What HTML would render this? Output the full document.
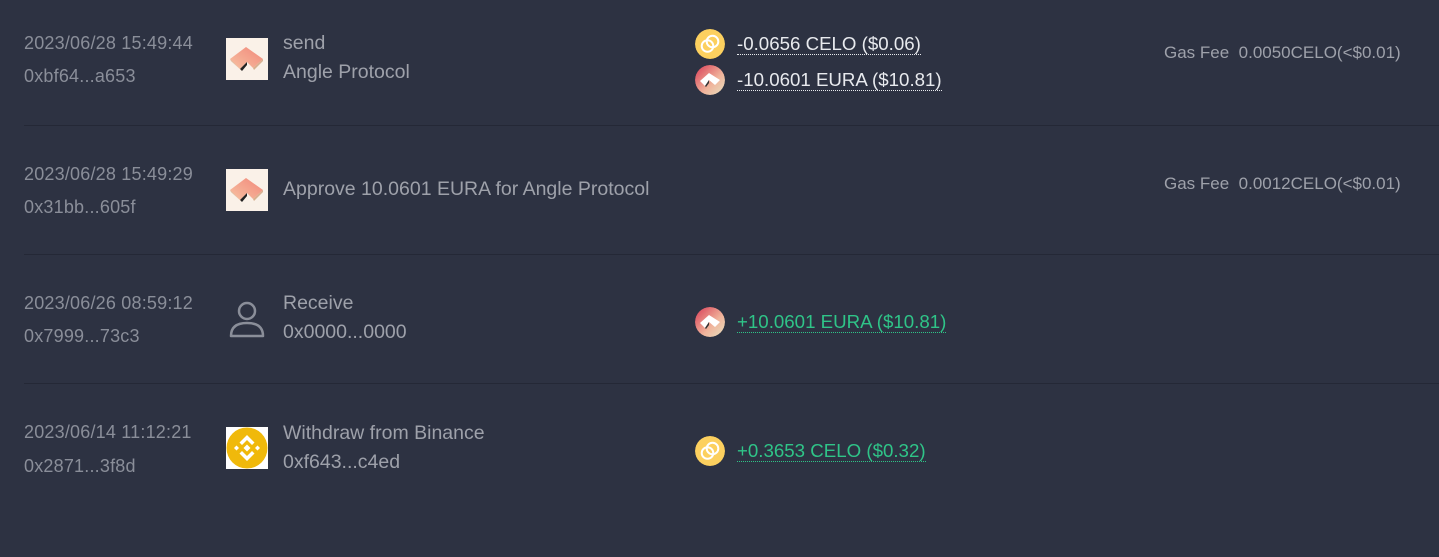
<!DOCTYPE html><html><head><style>
body{margin:0;width:1439px;height:557px;background:#2d3242;font-family:"Liberation Sans",sans-serif;overflow:hidden;position:relative}
.a{position:absolute;white-space:nowrap}
.d{color:#8a8e99;font-size:18px;letter-spacing:0.2px}
.t{color:#9ea1aa;font-size:19.5px}
.m{font-size:18.7px;color:#e8eaee;border-bottom:1px dotted #e8eaee;line-height:21px}
.g{color:#2fc488;border-bottom-color:#2fc488}
.sep{position:absolute;left:24px;right:0;height:1px;background:#242836}
.ic{position:absolute;width:42px;height:42px}
.c{position:absolute;width:30px;height:30px;border-radius:50%}
.gf{color:#9ea1aa;font-size:17px}
</style></head><body>
<svg width="0" height="0" style="position:absolute"><defs>
<linearGradient id="ag" x1="0" y1="1" x2="1" y2="0"><stop offset="0" stop-color="#f7c2a2"/><stop offset="1" stop-color="#f1877a"/></linearGradient>
<symbol id="ang" viewBox="0 0 42 42"><rect width="42" height="42" fill="#faf1e8"/><path d="M4 21 L20 9 L37 21 L27 30 L21 24 L14 31 Z" fill="url(#ag)"/><path d="M14 31 L21 24 L21 27 L16 33 Z" fill="#222"/><path d="M4 21 L14 31 L16 33 L5 23Z" fill="#d8b08f"/><path d="M27 30 L37 21 L37 23 L28 32Z" fill="#d8b08f"/></symbol>
<symbol id="celo" viewBox="0 0 30 30"><circle cx="15" cy="15" r="15" fill="#fcd05f"/><circle cx="12.5" cy="17" r="5.8" fill="none" stroke="#fff" stroke-width="2"/><circle cx="17.5" cy="12.5" r="5.8" fill="none" stroke="#fff" stroke-width="2"/></symbol>
<linearGradient id="eg" x1="0" y1="0" x2="1" y2="1"><stop offset="0" stop-color="#d83a55"/><stop offset=".6" stop-color="#f0b59c"/><stop offset="1" stop-color="#e6e0c0"/></linearGradient>
<symbol id="eura" viewBox="0 0 30 30"><circle cx="15" cy="15" r="15" fill="url(#eg)"/><path d="M5 16 L14 8 L25 15 L20 20 L14 15 L10 21 Z" fill="#fff"/><path d="M10 21 L14 15 L14 18 L11 22Z" fill="#333"/></symbol>
</defs></svg>

<div class="a d" style="left:24px;top:33px">2023/06/28 15:49:44</div>
<div class="a d" style="left:24px;top:66px">0xbf64...a653</div>
<svg class="ic" style="left:226px;top:38px"><use href="#ang"/></svg>
<div class="a t" style="left:283px;top:32px">send</div>
<div class="a t" style="left:283px;top:61px">Angle Protocol</div>
<svg class="c" style="left:695px;top:29px"><use href="#celo"/></svg>
<div class="a m" style="left:737px;top:33px">-0.0656 CELO ($0.06)</div>
<svg class="c" style="left:695px;top:65px"><use href="#eura"/></svg>
<div class="a m" style="left:737px;top:69px">-10.0601 EURA ($10.81)</div>
<div class="a gf" style="left:1164px;top:43px">Gas Fee&nbsp; 0.0050CELO(&lt;$0.01)</div>
<div class="sep" style="top:125px"></div>

<div class="a d" style="left:24px;top:164px">2023/06/28 15:49:29</div>
<div class="a d" style="left:24px;top:197px">0x31bb...605f</div>
<svg class="ic" style="left:226px;top:169px"><use href="#ang"/></svg>
<div class="a t" style="left:283px;top:178px">Approve 10.0601 EURA for Angle Protocol</div>
<div class="a gf" style="left:1164px;top:174px">Gas Fee&nbsp; 0.0012CELO(&lt;$0.01)</div>
<div class="sep" style="top:254px"></div>

<div class="a d" style="left:24px;top:293px">2023/06/26 08:59:12</div>
<div class="a d" style="left:24px;top:326px">0x7999...73c3</div>
<svg style="position:absolute;left:226px;top:298px" width="42" height="42" viewBox="0 0 42 42"><circle cx="21" cy="13" r="8" fill="none" stroke="#8a8e99" stroke-width="2.5"/><path d="M5 38 C5 28 12 25 21 25 C30 25 37 28 37 38 Z" fill="none" stroke="#8a8e99" stroke-width="2.5" stroke-linejoin="round"/></svg>
<div class="a t" style="left:283px;top:292px">Receive</div>
<div class="a t" style="left:283px;top:321px">0x0000...0000</div>
<svg class="c" style="left:695px;top:307px"><use href="#eura"/></svg>
<div class="a m g" style="left:737px;top:311px">+10.0601 EURA ($10.81)</div>
<div class="sep" style="top:383px"></div>

<div class="a d" style="left:24px;top:422px">2023/06/14 11:12:21</div>
<div class="a d" style="left:24px;top:456px">0x2871...3f8d</div>
<svg style="position:absolute;left:226px;top:427px" width="42" height="42" viewBox="0 0 42 42"><rect width="42" height="42" fill="#fff"/><circle cx="21" cy="21" r="20.5" fill="#f0b90b"/><g fill="#fff"><path d="M21 8 L28.5 15.5 L26 18 L21 13 L16 18 L13.5 15.5Z"/><path d="M21 34 L28.5 26.5 L26 24 L21 29 L16 24 L13.5 26.5Z"/><path d="M8 21 L10.5 18.5 L13 21 L10.5 23.5Z"/><path d="M34 21 L31.5 18.5 L29 21 L31.5 23.5Z"/><path d="M21 17.5 L24.5 21 L21 24.5 L17.5 21Z"/></g></svg>
<div class="a t" style="left:283px;top:422px">Withdraw from Binance</div>
<div class="a t" style="left:283px;top:451px">0xf643...c4ed</div>
<svg class="c" style="left:695px;top:436px"><use href="#celo"/></svg>
<div class="a m g" style="left:737px;top:440px">+0.3653 CELO ($0.32)</div>
</body></html>
